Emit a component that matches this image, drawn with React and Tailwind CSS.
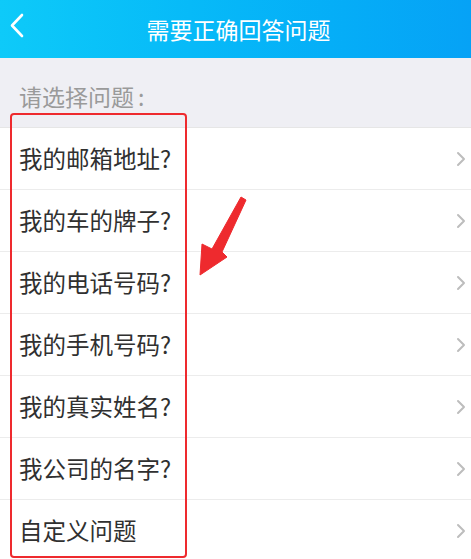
import React from 'react';

const questions = [
  '我的邮箱地址?',
  '我的车的牌子?',
  '我的电话号码?',
  '我的手机号码?',
  '我的真实姓名?',
  '我公司的名字?',
  '自定义问题',
];

const Chevron = () => (
  <svg width="10" height="16" viewBox="0 0 10 16" fill="none">
    <path d="M2 2l6 6-6 6" stroke="#bdbdbd" strokeWidth="2" strokeLinecap="round" strokeLinejoin="round" />
  </svg>
);

const App = () => {
  return (
    <div
      className="relative w-[471px] h-[559px] overflow-hidden bg-white"
      style={{ fontFamily: '"Noto Sans CJK SC", "Noto Sans", sans-serif' }}
    >
      {/* header */}
      <div className="relative h-[58px] flex items-center justify-center bg-linear-to-r from-[#0ecaf9] to-[#06a2f6]">
        <svg className="absolute left-[9px] top-[13px]" width="16" height="25" viewBox="0 0 16 25" fill="none">
          <path d="M13 2L3 12.5 13 23" stroke="white" strokeWidth="2.6" strokeLinecap="round" strokeLinejoin="round" />
        </svg>
        <h1 className="text-[23px] text-white leading-none pl-[6px]">需要正确回答问题</h1>
      </div>

      {/* label */}
      <div className="h-[70px] flex items-center pt-[8px] pl-[19px] bg-[#efeff4] border-b border-[#e6e6e6]">
        <span className="text-[23px] text-[#9a9a9a] leading-none">请选择问题<span className="ml-[4px]">:</span></span>
      </div>

      {/* list */}
      <ul>
        {questions.map((q) => (
          <li key={q} className="h-[62px] flex items-center justify-between pl-[19px] pr-[5px] border-b border-[#ececec]">
            <span className="text-[23.5px] text-[#303030] leading-none">{q}</span>
            <Chevron />
          </li>
        ))}
      </ul>

      {/* red annotation box */}
      <div className="absolute left-[10px] top-[113px] w-[177px] h-[445px] border-[2.5px] border-[#ee2a2e] rounded-[4px] pointer-events-none" />

      {/* red arrow */}
      <svg className="absolute left-0 top-0 pointer-events-none" width="471" height="559" viewBox="0 0 471 559">
        <polygon
          points="241,197 246,200 222,252 227,257 200,275 202,244 212,249"
          fill="#ee2a2e"
          stroke="#ee2a2e"
          strokeWidth="1"
          strokeLinejoin="round"
        />
      </svg>
    </div>
  );
};

export default App;
